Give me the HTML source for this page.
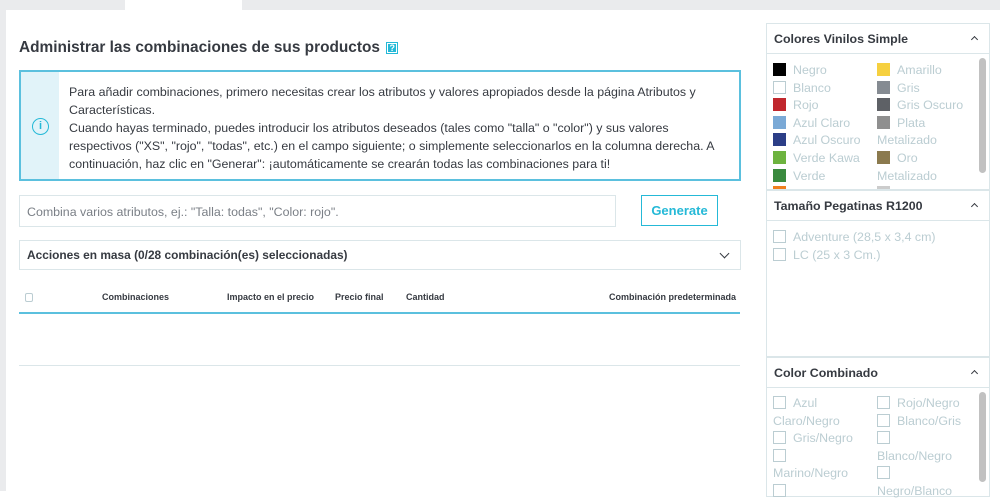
<!DOCTYPE html>
<html><head><meta charset="utf-8"><style>
*{box-sizing:border-box;margin:0;padding:0}
body{width:1000px;height:491px;overflow:hidden;background:#fff;font-family:"Liberation Sans",sans-serif;color:#363a41;position:relative}
.abs{position:absolute}
.topbar{left:0;top:0;width:1000px;height:10px;background:#eaebed}
.tab{left:125px;top:0;width:117px;height:10px;background:#fff}
.leftbar{left:0;top:0;width:6px;height:491px;background:#eaebed}
h2{left:19px;top:39px;font-size:15.4px;font-weight:bold;color:#363a41;white-space:nowrap}
.help{display:inline-block;width:12px;height:12px;background:#25b9d7;border:1px solid #25b9d7;color:#fff;font-size:9px;text-align:center;line-height:11px;vertical-align:1px;margin-left:2px;box-shadow:inset 0 0 0 1px #fff}
.info{left:19px;top:70px;width:722px;height:111px;border:2px solid #5bc0de;background:#fff}
.info .side{position:absolute;left:0;top:0;width:38px;height:107px;background:#e1f3f9}
.info .ic{position:absolute;left:11px;top:46px;width:17px;height:17px;border:1.5px solid #25b9d7;border-radius:50%;color:#25b9d7;font-size:11px;text-align:center;line-height:14px;font-weight:bold}
.info p{position:absolute;left:48px;top:11px;width:660px;font-size:12.4px;line-height:18px;color:#363a41}
.inp{left:19px;top:195px;width:597px;height:32px;border:1px solid #dbe6e9;font-size:12.4px;color:#7a7f86;padding:9px 7px}
.btn{left:641px;top:195px;width:77px;height:31px;border:1px solid #25b9d7;color:#25b9d7;font-size:13px;font-weight:bold;text-align:center;line-height:29px}
.bulk{left:19px;top:240px;width:722px;height:30px;border:1px solid #dbe6e9;font-size:11.9px;font-weight:bold;padding:7px 7px}
.bulk .ch{position:absolute;right:12px;top:9px;width:7px;height:7px;border-right:1.5px solid #363a41;border-bottom:1.5px solid #363a41;transform:rotate(45deg)}
.th{top:292px;font-size:9px;font-weight:bold;color:#363a41;white-space:nowrap}
.cb{left:25px;top:293px;width:8px;height:9px;border:1px solid #bbcdd2;border-radius:2px}
.line1{left:19px;top:312px;width:721px;height:2px;background:#5bc0de}
.line2{left:19px;top:365px;width:721px;height:1px;background:#dbe6e9}
.panel{left:766px;width:224px;border:1px solid #dbe6e9;background:#fff}
.ph{height:30px;border-bottom:1px solid #dbe6e9;font-size:12.4px;font-weight:bold;padding:8px 7px;position:relative}
.ph:after{content:"";position:absolute;right:12px;top:13px;width:4px;height:4px;border-left:1.2px solid #363a41;border-top:1.2px solid #363a41;transform:rotate(45deg)}
.body{position:relative;overflow:hidden;font-size:12.4px;color:#bbcdd2;line-height:17.6px}
.it{position:absolute;white-space:nowrap}
.sw{display:inline-block;width:13px;height:13px;vertical-align:-2px;margin-right:7px}
.bx{display:inline-block;width:13px;height:13px;border:1px solid #bbcdd2;vertical-align:-2px;margin-right:7px}
.sb{position:absolute;right:3px;width:7px;background:#c1c1c1;border-radius:4px}
</style></head><body>
<div class="abs topbar"></div><div class="abs tab"></div><div class="abs leftbar"></div>
<h2 class="abs">Administrar las combinaciones de sus productos <span class="help">?</span></h2>
<div class="abs info"><div class="side"></div><div class="ic">i</div>
<p>Para añadir combinaciones, primero necesitas crear los atributos y valores apropiados desde la página Atributos y Características.<br>Cuando hayas terminado, puedes introducir los atributos deseados (tales como "talla" o "color") y sus valores respectivos ("XS", "rojo", "todas", etc.) en el campo siguiente; o simplemente seleccionarlos en la columna derecha. A continuación, haz clic en "Generar": ¡automáticamente se crearán todas las combinaciones para ti!</p></div>
<div class="abs inp">Combina varios atributos, ej.: "Talla: todas", "Color: rojo".</div>
<div class="abs btn">Generate</div>
<div class="abs bulk">Acciones en masa (0/28 combinación(es) seleccionadas)<span class="ch"></span></div>
<div class="abs cb"></div>
<div class="abs th" style="left:102px">Combinaciones</div>
<div class="abs th" style="left:227px">Impacto en el precio</div>
<div class="abs th" style="left:335px">Precio final</div>
<div class="abs th" style="left:406px">Cantidad</div>
<div class="abs th" style="left:609px">Combinación predeterminada</div>
<div class="abs line1"></div><div class="abs line2"></div>

<div class="abs panel" style="top:23px;height:167px"><div class="ph">Colores Vinilos Simple</div>
<div class="body" style="height:135px">
<div class="it" style="left:6px;top:8px"><span class="sw" style="background:#000"></span>Negro<br><span class="sw" style="border:1px solid #bbcdd2"></span>Blanco<br><span class="sw" style="background:#c0272d"></span>Rojo<br><span class="sw" style="background:#7aa9d6"></span>Azul Claro<br><span class="sw" style="background:#2c3e87"></span>Azul Oscuro<br><span class="sw" style="background:#6db33f"></span>Verde Kawa<br><span class="sw" style="background:#3a8a3e"></span>Verde<br><span class="sw" style="background:#f07f1f"></span></div>
<div class="it" style="left:110px;top:8px"><span class="sw" style="background:#f6d03f"></span>Amarillo<br><span class="sw" style="background:#858b92"></span>Gris<br><span class="sw" style="background:#5e6166"></span>Gris Oscuro<br><span class="sw" style="background:#8f8f8f"></span>Plata<br>Metalizado<br><span class="sw" style="background:#8b7a4e"></span>Oro<br>Metalizado<br><span class="sw" style="background:#ccc"></span></div>
<div class="sb" style="top:4px;height:115px"></div>
</div></div>

<div class="abs panel" style="top:190px;height:167px"><div class="ph">Tamaño Pegatinas R1200</div>
<div class="body" style="height:135px"><div class="it" style="left:6px;top:8px"><span class="bx"></span>Adventure (28,5 x 3,4 cm)<br><span class="bx"></span>LC (25 x 3 Cm.)</div></div></div>

<div class="abs panel" style="top:357px;height:140px"><div class="ph">Color Combinado</div>
<div class="body" style="height:110px">
<div class="it" style="left:6px;top:7px"><span class="bx"></span>Azul<br>Claro/Negro<br><span class="bx"></span>Gris/Negro<br><span class="bx"></span><br>Marino/Negro<br><span class="bx"></span></div>
<div class="it" style="left:110px;top:7px"><span class="bx"></span>Rojo/Negro<br><span class="bx"></span>Blanco/Gris<br><span class="bx"></span><br>Blanco/Negro<br><span class="bx"></span><br>Negro/Blanco</div>
<div class="sb" style="top:4px;height:90px"></div>
</div></div>
</body></html>
